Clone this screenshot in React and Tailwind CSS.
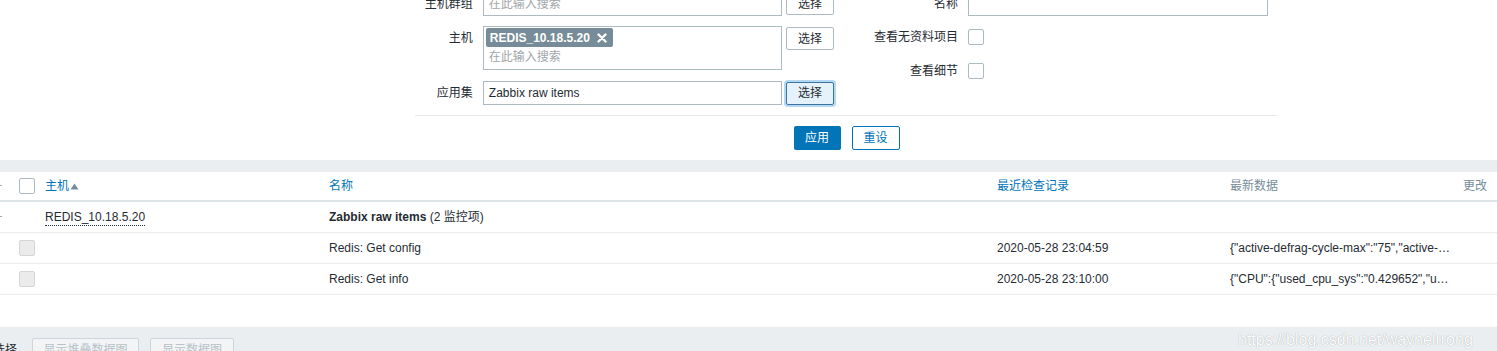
import React from "react";

const font = { fontFamily: '"Liberation Sans", Arial, "Noto Sans CJK SC", sans-serif' };

function SelectBtn({ focused }) {
  return (
    <button
      className={
        "ml-[4px] w-[48px] h-[23px] rounded-[2px] border text-[12px] leading-none text-[#1f2c33] " +
        (focused
          ? "bg-[#e5f1fb] border-[#3f739c] shadow-[0_0_0_2px_#b3d8f3]"
          : "bg-white border-[#acbbc2]")
      }
    >
      选择
    </button>
  );
}

function Checkbox({ disabled }) {
  return (
    <div
      className={
        "w-[16px] h-[16px] rounded-[2px] border " +
        (disabled ? "bg-[#ebebeb] border-[#d5d5d5]" : "bg-white border-[#acbbc2]")
      }
    />
  );
}

function SortArrow() {
  return (
    <svg width="9" height="7" viewBox="0 0 9 7" className="ml-[1px]">
      <path d="M4.5 0.5 L8.5 6.5 L0.5 6.5 Z" fill="#768d99" />
    </svg>
  );
}

export default function App() {
  return (
    <div className="w-[1497px] h-[351px] overflow-hidden bg-white text-[12px] text-[#1f2c33]" style={font}>
      {/* Filter form */}
      <div className="ml-[415px] w-[863px]">
        <div className="flex">
          {/* Left column */}
          <div className="flex flex-col w-[419px]">
            <div className="flex items-start mt-[-8px]">
              <div className="w-[58px] text-right leading-[24px]">主机群组</div>
              <div className="ml-[10px] w-[300px] h-[24px] border border-[#acbbc2] bg-white px-[5px] leading-[22px] text-[#a0a6aa]">
                在此输入搜索
              </div>
              <SelectBtn />
            </div>
            <div className="flex items-start mt-[10px]">
              <div className="w-[58px] text-right leading-[24px]">主机</div>
              <div className="ml-[10px] w-[300px] h-[44px] border border-[#acbbc2] bg-white px-[2px] pt-[1px]">
                <div className="inline-flex items-center h-[19px] rounded-[2px] bg-[#768d99] px-[4px] text-white font-bold text-[12px]">
                  <span>REDIS_10.18.5.20</span>
                  <svg width="10" height="10" viewBox="0 0 10 10" className="ml-[7px] mr-[2px]">
                    <path d="M1.5 1.5 L8.5 8.5 M8.5 1.5 L1.5 8.5" stroke="#ffffff" strokeWidth="2.4" strokeLinecap="round" />
                  </svg>
                </div>
                <div className="pl-[3px] leading-[20px] text-[#a0a6aa]">在此输入搜索</div>
              </div>
              <div className="mt-[1px] flex">
                <SelectBtn />
              </div>
            </div>
            <div className="flex items-center mt-[11px]">
              <div className="w-[58px] text-right leading-[24px]">应用集</div>
              <div className="ml-[10px] w-[300px] h-[24px] border border-[#acbbc2] bg-white px-[5px] leading-[22px]">
                Zabbix raw items
              </div>
              <SelectBtn focused />
            </div>
          </div>
          {/* Right column */}
          <div className="flex flex-col">
            <div className="flex items-start mt-[-8px]">
              <div className="w-[124px] text-right leading-[24px]">名称</div>
              <div className="ml-[10px] w-[300px] h-[24px] border border-[#acbbc2] bg-white" />
            </div>
            <div className="flex items-center mt-[13px] h-[16px]">
              <div className="w-[124px] text-right">查看无资料项目</div>
              <div className="ml-[10px]">
                <Checkbox />
              </div>
            </div>
            <div className="flex items-center mt-[18px] h-[16px]">
              <div className="w-[124px] text-right">查看细节</div>
              <div className="ml-[10px]">
                <Checkbox />
              </div>
            </div>
          </div>
        </div>
        <div className="mt-[10px] border-t border-[#e6e9eb]" />
        <div className="flex justify-center gap-[11px] pt-[10px] pb-[10px]">
          <button className="w-[47px] h-[24px] rounded-[2px] bg-[#0275b8] text-white text-[12px]">应用</button>
          <button className="w-[48px] h-[24px] rounded-[2px] border border-[#0275b8] bg-white text-[#0275b8] text-[12px]">重设</button>
        </div>
      </div>

      {/* Grey band */}
      <div className="h-[12px] bg-[#ebeef0]" />

      {/* Table */}
      <div className="bg-white">
        <div className="grid grid-cols-[45px_284px_668px_233px_233px_1fr] h-[30px] items-center border-b-2 border-[#dfe4e7]">
          <div className="relative h-full flex items-center">
            <span className="absolute left-0 top-[13px] w-[2px] h-[1px] bg-[#9aa7ae]" />
            <div className="ml-[19px]">
              <Checkbox />
            </div>
          </div>
          <div className="flex items-center text-[#0275b8]">
            主机
            <SortArrow />
          </div>
          <div className="text-[#0275b8]">名称</div>
          <div className="text-[#0275b8]">最近检查记录</div>
          <div className="text-[#768d99]">最新数据</div>
          <div className="text-[#768d99]">更改</div>
        </div>

        <div className="grid grid-cols-[45px_284px_668px_233px_233px_1fr] h-[31px] items-center border-b border-[#ebeef0]">
          <div className="relative h-full">
            <span className="absolute left-0 top-[14px] w-[2px] h-[1px] bg-[#9aa7ae]" />
          </div>
          <div>
            <span className="border-b border-dotted border-[#1f2c33] pb-[1px]">REDIS_10.18.5.20</span>
          </div>
          <div>
            <span className="font-bold">Zabbix raw items</span> (2 监控项)
          </div>
          <div />
          <div />
          <div />
        </div>

        {[
          ["Redis: Get config", "2020-05-28 23:04:59", '{"active-defrag-cycle-max":"75","active-…'],
          ["Redis: Get info", "2020-05-28 23:10:00", '{"CPU":{"used_cpu_sys":"0.429652","u…'],
        ].map(([name, time, data]) => (
          <div
            key={name}
            className="grid grid-cols-[45px_284px_668px_233px_233px_1fr] h-[31px] items-center border-b border-[#ebeef0]"
          >
            <div className="ml-[19px]">
              <Checkbox disabled />
            </div>
            <div />
            <div>{name}</div>
            <div>{time}</div>
            <div className="whitespace-nowrap">{data}</div>
            <div />
          </div>
        ))}
        <div className="h-[32px]" />
      </div>

      {/* Bottom action bar */}
      <div className="relative bg-[#ebeef0] h-[40px] flex items-start pt-[11px] pl-0">
        <span className="ml-[-7px] mt-[2px] text-[#1f2c33] leading-[20px]">选择</span>
        <button className="ml-[15px] w-[107px] h-[24px] rounded-[2px] border border-[#cfd6da] bg-[#f2f4f5] text-[#b8c2c8] text-[12px]">
          显示堆叠数据图
        </button>
        <button className="ml-[11px] w-[84px] h-[24px] rounded-[2px] border border-[#cfd6da] bg-[#f2f4f5] text-[#b8c2c8] text-[12px]">
          显示数据图
        </button>
        <span className="absolute left-[1238px] top-[1px] text-[16px] text-white opacity-90 [text-shadow:0_0_1px_#8a9399] whitespace-nowrap">
          https://blog.csdn.net/waynelrrong
        </span>
      </div>
    </div>
  );
}
